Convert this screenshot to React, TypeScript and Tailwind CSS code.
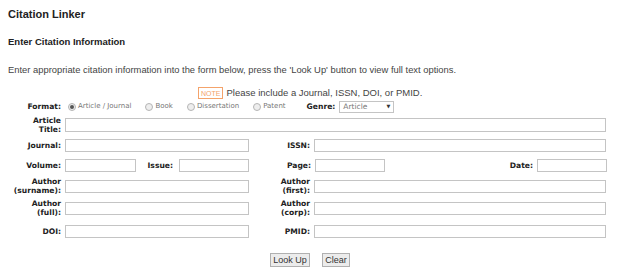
import React from "react";

const label = "font-['DejaVu_Sans',sans-serif] text-[7.6px] font-bold text-[#222] text-right leading-[9px]";
const field = "h-[13px] border border-[#c4c4c4] bg-white outline-none shrink-0";

function Radio({ checked, text }: { checked?: boolean; text: string }) {
  return (
    <span className="flex items-center gap-[2px]">
      <span className="flex h-[8px] w-[8px] items-center justify-center rounded-full border border-[#b5b5b5] bg-[#eee]">
        {checked && <span className="h-[4px] w-[4px] rounded-full bg-[#555]" />}
      </span>
      <span className="font-['DejaVu_Sans',sans-serif] text-[7px] text-[#777]">{text}</span>
    </span>
  );
}

export default function App() {
  return (
    <div className="h-[277px] w-[640px] bg-white pl-[8px] font-['Liberation_Sans',Arial,sans-serif] text-[#222]">
      <div className="pt-[6px] text-[11px] font-bold leading-[16px]">Citation Linker</div>
      <div className="mt-[13px] text-[9.5px] font-bold leading-[14px]">Enter Citation Information</div>
      <p className="mt-[14px] text-[9.4px] leading-[14px] text-[#444]">
        Enter appropriate citation information into the form below, press the 'Look Up' button to view full text options.
      </p>

      <div className="mt-[9px] flex h-[14px] items-center pl-[190px]">
        <span className="flex h-[12px] items-center border border-[#f4a36b] px-[2px] text-[7px] leading-none text-[#f4a36b]">NOTE</span>
        <span className="ml-[3px] text-[9.5px] text-[#444]">Please include a Journal, ISSN, DOI, or PMID.</span>
      </div>

      <div className="flex h-[13px] items-center">
        <span className={`${label} w-[53px]`}>Format:</span>
        <span className="ml-[7px] flex items-center gap-[14px]">
          <Radio checked text="Article / Journal" />
          <Radio text="Book" />
          <Radio text="Dissertation" />
          <Radio text="Patent" />
        </span>
        <span className={`${label} ml-[21px]`}>Genre:</span>
        <span className="ml-[4px] flex h-[12px] w-[55px] items-center justify-between border border-[#c4c4c4] px-[3px] font-['DejaVu_Sans',sans-serif] text-[7.5px] text-[#777]">
          Article<span className="text-[5px] text-[#333]">▼</span>
        </span>
      </div>

      <div className="mt-[3px] flex h-[18px] items-center">
        <span className={`${label} w-[53px]`}>Article<br />Title:</span>
        <input className={`${field} ml-[4px] h-[14px] w-[541px]`} />
      </div>

      <div className="mt-[5px] flex h-[13px] items-center">
        <span className={`${label} w-[53px]`}>Journal:</span>
        <input className={`${field} ml-[4px] w-[184px]`} />
        <span className={`${label} w-[61px]`}>ISSN:</span>
        <input className={`${field} ml-[4px] w-[292px]`} />
      </div>

      <div className="mt-[7px] flex h-[13px] items-center">
        <span className={`${label} w-[53px]`}>Volume:</span>
        <input className={`${field} ml-[4px] w-[71px]`} />
        <span className={`${label} w-[37px]`}>Issue:</span>
        <input className={`${field} ml-[6px] w-[70px]`} />
        <span className={`${label} w-[62px]`}>Page:</span>
        <input className={`${field} ml-[4px] w-[70px]`} />
        <span className={`${label} w-[148px]`}>Date:</span>
        <input className={`${field} ml-[4px] w-[70px]`} />
      </div>

      <div className="mt-[5px] flex h-[18px] items-center">
        <span className={`${label} w-[53px]`}>Author<br />(surname):</span>
        <input className={`${field} ml-[4px] w-[184px]`} />
        <span className={`${label} w-[61px]`}>Author<br />(first):</span>
        <input className={`${field} ml-[4px] w-[292px]`} />
      </div>

      <div className="mt-[4px] flex h-[18px] items-center">
        <span className={`${label} w-[53px]`}>Author<br />(full):</span>
        <input className={`${field} ml-[4px] w-[184px]`} />
        <span className={`${label} w-[61px]`}>Author<br />(corp):</span>
        <input className={`${field} ml-[4px] w-[292px]`} />
      </div>

      <div className="mt-[8px] flex h-[13px] items-center">
        <span className={`${label} w-[53px]`}>DOI:</span>
        <input className={`${field} ml-[4px] w-[184px]`} />
        <span className={`${label} w-[61px]`}>PMID:</span>
        <input className={`${field} ml-[4px] w-[292px]`} />
      </div>

      <div className="mt-[15px] flex h-[14px] items-center gap-[12px] pl-[262px]">
        <button className="h-[14px] w-[40px] border border-[#b0b0b0] bg-[#ececec] text-[9px] leading-none text-[#333]">Look Up</button>
        <button className="h-[14px] w-[28px] border border-[#b0b0b0] bg-[#ececec] text-[9px] leading-none text-[#333]">Clear</button>
      </div>
    </div>
  );
}
